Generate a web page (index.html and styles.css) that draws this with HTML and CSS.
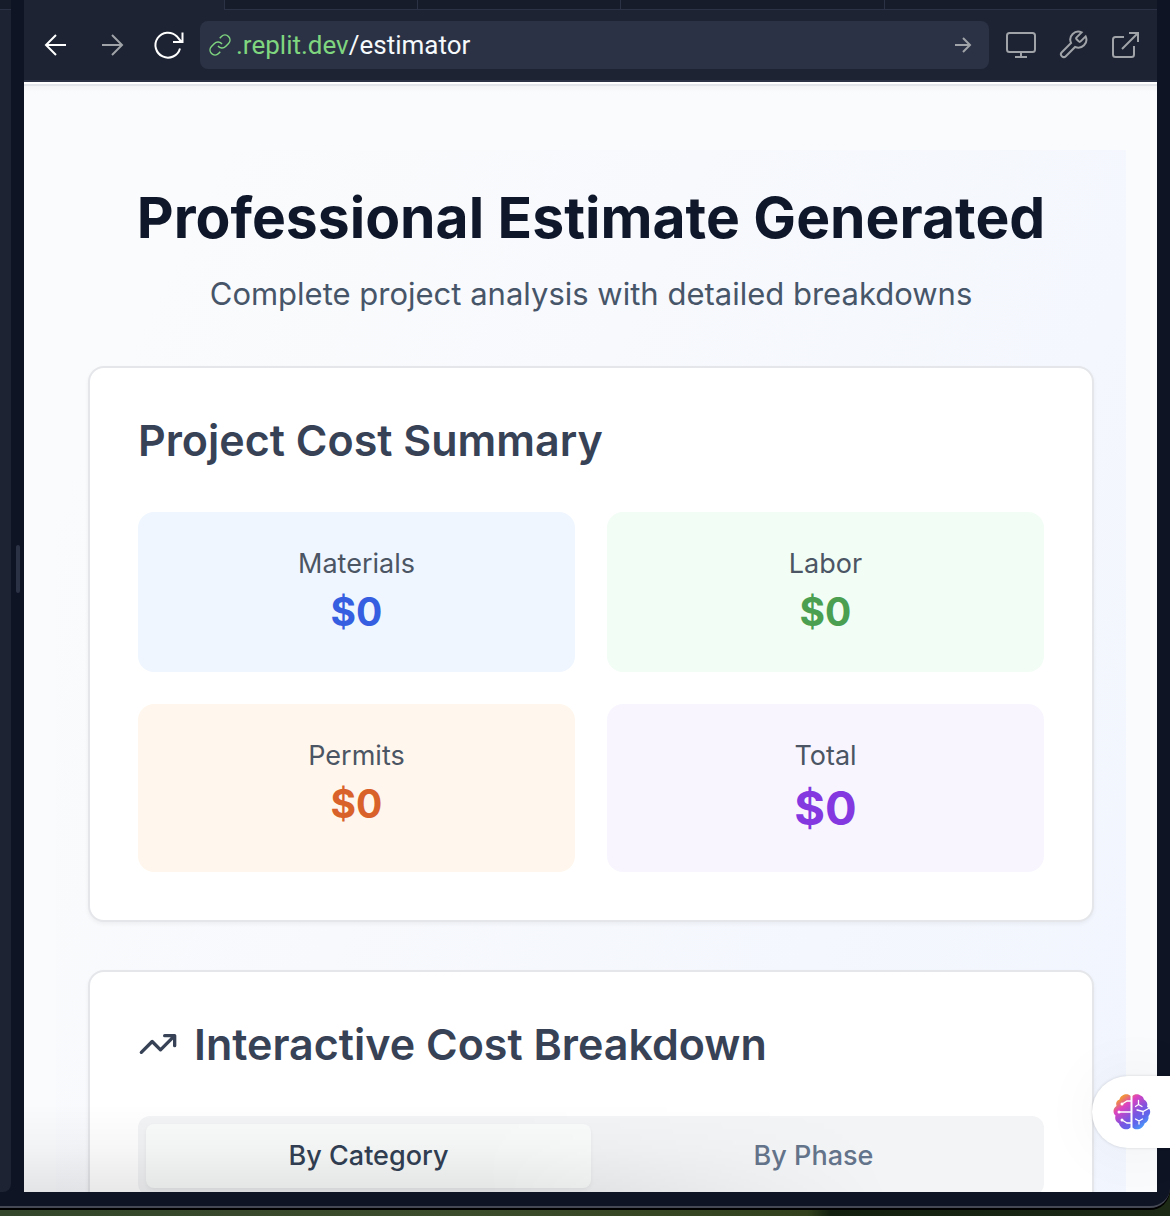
FILE: index.html
```html
<!DOCTYPE html>
<html lang="en">
<head>
<meta charset="utf-8">
<meta name="viewport" content="width=device-width, initial-scale=1">
<title>Estimator</title>
<link rel="stylesheet" href="styles.css">
</head>
<body>
<div class="desktop">
  <div class="window">
    <div class="workspace">
      <div class="side-pane"><div class="side-tabs"></div></div>
      <div class="gutter"><span class="gutter-handle"></span></div>
      <section class="browser">
        <div class="tab-strip">
          <span class="tab tab-active"></span>
          <span class="tab tab-a"></span>
          <span class="tab tab-b"></span>
          <span class="tab tab-c"></span>
          <span class="tab tab-rest"></span>
        </div>
        <nav class="toolbar" aria-label="Browser">
          <div class="tools tools-nav">
            <button class="tool tool-on" type="button" aria-label="Back">
              <svg width="24" height="24" viewBox="0 0 24 24"><path d="M22 12H2M12 2L2 12l10 10"/></svg>
            </button>
            <button class="tool" type="button" aria-label="Forward">
              <svg width="24" height="24" viewBox="0 0 24 24"><path d="M2 12h20M12 2l10 10-10 10"/></svg>
            </button>
            <button class="tool tool-on" type="button" aria-label="Reload">
              <svg width="32" height="32" viewBox="0 0 32 32"><path d="M28 19.500A12.500 12.500 0 1 1 24.700 7.200L29.500 13M30.500 3.500v9.500h-9.500"/></svg>
            </button>
          </div>
          <div class="address">
            <svg class="link-icon" width="24" height="24" viewBox="0 0 24 24"><path d="M10 13a5 5 0 0 0 7.540.54l3-3a5 5 0 0 0-7.070-7.070l-1.720 1.710M14 11a5 5 0 0 0-7.540-.54l-3 3a5 5 0 0 0 7.070 7.070l1.710-1.710"/></svg>
            <span class="url"><span class="url-host">.replit.dev</span>/estimator</span>
            <button class="go" type="button" aria-label="Go">
              <svg width="20" height="20" viewBox="0 0 20 20"><path d="M2 10h15M10 3l7 7-7 7"/></svg>
            </button>
          </div>
          <div class="tools">
            <button class="tool" type="button" aria-label="Device size">
              <svg width="32" height="32" viewBox="0 0 32 32"><rect x="2" y="4" width="28" height="19" rx="2.500"/><path d="M16 23v5M10 28h12"/></svg>
            </button>
            <button class="tool" type="button" aria-label="Developer tools">
              <svg width="32" height="32" viewBox="0 0 24 24"><path class="thin" d="M14.700 6.300a1 1 0 0 0 0 1.400l1.600 1.600a1 1 0 0 0 1.400 0l3.770-3.770a6 6 0 0 1-7.940 7.940l-6.910 6.910a2.120 2.120 0 0 1-3-3l6.910-6.910a6 6 0 0 1 7.940-7.940l-3.760 3.760z"/></svg>
            </button>
            <button class="tool" type="button" aria-label="Open in new tab">
              <svg width="32" height="32" viewBox="0 0 32 32"><path d="M15 8H6.500A2.500 2.500 0 0 0 4 10.500v15A2.500 2.500 0 0 0 6.500 28h16a2.500 2.500 0 0 0 2.500-2.500V17M20 4h9v9M29 4L13 20"/></svg>
            </button>
          </div>
        </nav>
        <main class="page">
          <div class="estimate">
            <h1 class="title">Professional Estimate Generated</h1>
            <p class="subtitle">Complete project analysis with detailed breakdowns</p>
            <section class="card">
              <h2 class="card-title">Project Cost Summary</h2>
              <div class="tiles">
                <div class="tile tile-materials"><p class="label">Materials</p><p class="amount">$0</p></div>
                <div class="tile tile-labor"><p class="label">Labor</p><p class="amount">$0</p></div>
                <div class="tile tile-permits"><p class="label">Permits</p><p class="amount">$0</p></div>
                <div class="tile tile-total"><p class="label">Total</p><p class="amount amount-large">$0</p></div>
              </div>
            </section>
            <section class="card">
              <h2 class="card-title">
                <svg class="trend" width="40" height="40" viewBox="0 0 24 24"><path d="M22 7l-8.500 8.500-5-5L2 17M16 7h6v6"/></svg>
                Interactive Cost Breakdown
              </h2>
              <div class="segments" role="tablist">
                <button class="segment segment-active" type="button" role="tab" aria-selected="true">By Category</button>
                <button class="segment" type="button" role="tab" aria-selected="false">By Phase</button>
              </div>
            </section>
          </div>
          <div class="bottom-shade"></div>
        </main>
      </section>
    </div>
    <button class="assistant" type="button" aria-label="Assistant">
      <svg width="40" height="40" viewBox="0 0 40 40">
        <defs>
          <linearGradient id="brain" x1="0.100" y1="0" x2="0.900" y2="1">
            <stop offset="0" stop-color="#f5a623"/><stop offset=".12" stop-color="#f0923c"/><stop offset=".3" stop-color="#dd42c0"/><stop offset=".58" stop-color="#7c55e0"/><stop offset=".75" stop-color="#5f66ec"/><stop offset="1" stop-color="#3fb8ff"/>
          </linearGradient>
        </defs>
        <path fill="url(#brain)" d="M18.500 4C17 2 13 1.500 10.500 3.500 8.500 4 8 6 7.500 7.500 4.500 8.500 3.500 11 4.500 14 1 16 .500 21 3.500 23.500 2.500 27 4 30 7 31.500 8 36.500 15 39.500 18.500 35.500ZM20.500 4C22 2 26 1.500 28.500 3.500 31 4.500 31.500 6 32 7.500 35 9 36 12 35 15 39 17 39 21.500 36.500 24 37 27.500 35.500 30 32.500 31.500 31.500 36.500 24 39.500 20.500 35.500Z"/>
        <g fill="none" stroke="#fff" stroke-width="1.300" stroke-linecap="round">
          <path d="M19 9h-4l-5 3M19 20H7M19 31h-4l-5-3"/>
          <path d="M26.500 8.500v4l-3 2M26.500 12.500l3.500 2M25 18l6 1.500 5.500-3M31 19.500v3M23.500 27l3.500 2 3.500-2M27 29v3"/>
        </g>
        <g fill="#fff"><circle cx="10" cy="12" r="1.500"/><circle cx="7" cy="20" r="1.500"/><circle cx="10" cy="28" r="1.500"/></g>
      </svg>
    </button>
  </div>
</div>
</body>
</html>
```
FILE: styles.css
```css
* { box-sizing: border-box; }

body, h1, h2, p { margin: 0; }

button {
  border: 0;
  padding: 0;
  background: none;
  color: inherit;
  font: inherit;
}

svg {
  display: block;
  flex: none;
  fill: none;
  stroke: currentColor;
  stroke-width: 2;
}

body {
  font-family: Inter, "Liberation Sans", sans-serif;
  background: #1a2a14;
}

.desktop {
  display: flex;
  flex-direction: column;
  height: 100vh;
  padding-bottom: 8px;
  background: linear-gradient(90deg, #34472a, #3c4d2c 40%, #33421d 69%, #14200f 71%, #1c2a16);
}

.window {
  position: relative;
  flex: 1;
  display: flex;
  flex-direction: column;
  min-height: 0;
  padding-bottom: 14px;
  background: #0e1424;
  border-bottom: 2px solid #454955;
  border-radius: 0 0 20px 0;
  box-shadow: 0 2px 0 #000;
}

.workspace {
  flex: 1;
  display: grid;
  grid-template-columns: 11px 13px minmax(0, 1fr);
  grid-template-rows: minmax(0, 1fr);
  padding-right: 13px;
  min-height: 0;
}

.side-pane {
  background: #1d2332;
  border-radius: 0 0 8px 0;
}

.side-tabs {
  height: 10px;
  background: #171c2a;
  border-bottom: 1px solid #2b3245;
}

.gutter {
  display: flex;
  align-items: center;
  justify-content: center;
  padding-bottom: 54px;
}

.gutter-handle {
  width: 4px;
  height: 48px;
  border-radius: 2px;
  background: #2b3245;
}

.browser {
  display: flex;
  flex-direction: column;
  min-height: 0;
  background: #1d2332;
}

.tab-strip {
  display: flex;
  height: 10px;
}

.tab {
  background: #171c2a;
  border-left: 1px solid #2b3245;
  border-bottom: 1px solid #2b3245;
}

.tab-active { width: 200px; background: none; border: 0; }
.tab-a { width: 193px; }
.tab-b { width: 203px; }
.tab-c { width: 264px; }
.tab-rest { flex: 1; }

.toolbar {
  display: flex;
  align-items: center;
  gap: 16px;
  height: 72px;
  padding: 0 16px;
  border-bottom: 2px solid #2b3245;
  color: #a0a3a8;
}

.tools {
  display: flex;
  gap: 20px;
}

.tools-nav { gap: 24px; }

.tool {
  display: flex;
  align-items: center;
  justify-content: center;
  width: 32px;
  height: 48px;
}

.tool-on { color: #fff; }
.tool .thin { stroke-width: 1.500; }

.address {
  flex: 1;
  display: flex;
  align-items: center;
  height: 48px;
  padding: 0 16px 0 8px;
  border-radius: 8px;
  background: #2b3245;
}

.link-icon { color: #7fd67f; stroke-width: 1.500; }

.url {
  flex: 1;
  padding-left: 4px;
  color: #f5f9fc;
  font-family: Roboto, Inter, sans-serif;
  font-size: 26px;
  line-height: 32px;
}

.url-host { color: #7fd67f; }

.page {
  position: relative;
  flex: 1;
  min-height: 0;
  overflow: hidden;
  padding: 68px 31px 0 32px;
  background: linear-gradient(#fff 2px, #e3e6ea 2px, #e3e6ea 4px, #f3f4f6 4px, #fafbfc 10px);
}

.estimate {
  padding: 32px;
  background: linear-gradient(115deg, #fafbfc 10%, #f1f5fe);
}

.title {
  color: #0f172a;
  font-size: 57px;
  line-height: 72px;
  font-weight: 700;
  text-align: center;
}

.subtitle {
  margin: 16px 0 48px;
  color: #475569;
  font-size: 31px;
  line-height: 48px;
  text-align: center;
}

.card {
  margin-bottom: 48px;
  padding: 48px;
  background: #fff;
  border: 2px solid #e4e6ea;
  border-radius: 16px;
  box-shadow: 0 2px 4px rgba(0, 0, 0, 0.05);
}

.card-title {
  display: flex;
  align-items: center;
  gap: 16px;
  margin-bottom: 48px;
  color: #374256;
  font-size: 43px;
  line-height: 48px;
  font-weight: 600;
}

.trend { stroke-linecap: round; stroke-linejoin: round; }

.tiles {
  display: grid;
  grid-template-columns: 1fr 1fr;
  gap: 32px;
}

.tile {
  padding: 32px;
  border-radius: 16px;
  text-align: center;
}

.tile-materials { background: #eff6ff; color: #355fe0; }
.tile-labor { background: #f2fdf5; color: #4a9f50; }
.tile-permits { background: #fff7ed; color: #d9622b; }
.tile-total { background: #f8f5ff; color: #8438e0; }

.label {
  color: #4b5563;
  font-size: 27px;
  line-height: 40px;
}

.amount {
  font-size: 39px;
  line-height: 56px;
  font-weight: 700;
}

.amount-large { font-size: 47px; line-height: 64px; }

.segments {
  display: grid;
  grid-template-columns: 1fr 1fr;
  padding: 8px;
  border-radius: 12px;
  background: #f3f4f6;
}

.segment {
  height: 64px;
  border-radius: 8px;
  color: #64748b;
  font-size: 27px;
  line-height: 40px;
  font-weight: 500;
}

.segment-active {
  background: #fafcfb;
  color: #334155;
  box-shadow: 0 2px 4px rgba(0, 0, 0, 0.05);
}

/* Soft darkening along the lower edge, fading out to the right */
.bottom-shade {
  position: absolute;
  inset: auto 0 0 0;
  height: 88px;
  background: linear-gradient(transparent, rgba(0, 0, 0, 0.03) 50%, rgba(0, 0, 0, 0.09));
  -webkit-mask-image: linear-gradient(75deg, #000 40%, transparent 75%);
  mask-image: linear-gradient(75deg, #000 40%, transparent 75%);
}

.assistant {
  position: absolute;
  right: 0;
  bottom: 58px;
  width: 78px;
  height: 72px;
  padding-left: 20px;
  border-radius: 36px 0 0 36px;
  background: #fff;
  box-shadow: 0 0 3px rgba(0, 0, 0, 0.15), 0 0 64px rgba(0, 0, 0, 0.05);
}

.assistant svg { stroke: none; }
```
